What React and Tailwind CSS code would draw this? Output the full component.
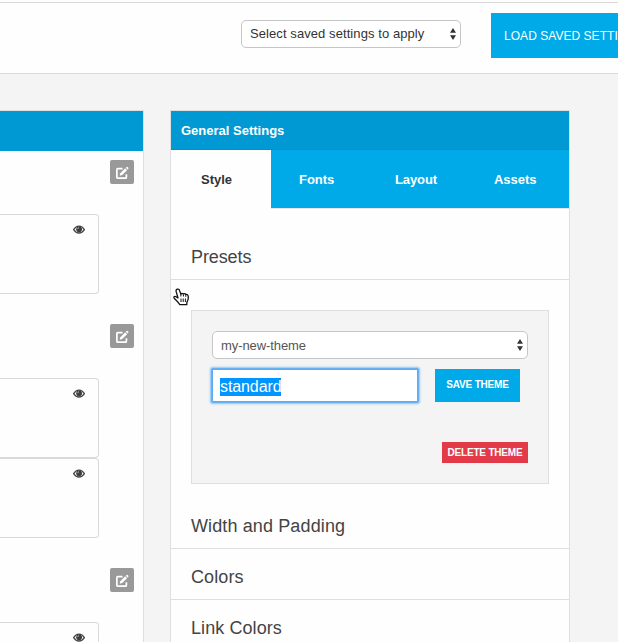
import React from "react";

function EditIcon() {
  return (
    <svg width="14" height="14" viewBox="0 0 14 14" fill="none" className="mt-px block">
      <path d="M7.6 2.6H2.9Q1.9 2.6 1.9 3.6V11.2Q1.9 12.2 2.9 12.2H10.4Q11.4 12.2 11.4 11.2V8.2" stroke="#fff" strokeWidth="1.7" />
      <path d="M4.7 9.8L5.3 7.2L10.2 2.3L12.1 4.2L7.2 9.1Z" fill="#fff" />
      <path d="M10.8 1.7L11.5 1Q12 0.6 12.5 1L13.3 1.8Q13.7 2.3 13.3 2.8L12.6 3.5Z" fill="#fff" />
    </svg>
  );
}

function EyeIcon() {
  return (
    <svg width="12" height="9" viewBox="0 0 12 9" className="block">
      <path d="M0.6 4.7Q2.7 1.2 6 1.2Q9.3 1.2 11.4 4.7Q9.3 8 6 8Q2.7 8 0.6 4.7Z" fill="#fff" stroke="#444" strokeWidth="1.3" />
      <circle cx="6.1" cy="4.3" r="2.9" fill="#3c3c3c" />
      <path d="M4.7 4.2Q4.7 2.8 6 2.7" stroke="#ccc" strokeWidth="0.8" fill="none" />
    </svg>
  );
}

function Arrows() {
  return (
    <svg width="6" height="12" viewBox="0 0 6 12" className="block shrink-0">
      <path d="M3 0L6 4.8H0Z M0 7.2H6L3 12Z" fill="#333" />
    </svg>
  );
}

function EditRow() {
  return (
    <div className="flex justify-end pr-[9px]">
      <button className="flex h-6 w-6 items-center justify-center rounded-[2px] bg-[#999]">
        <EditIcon />
      </button>
    </div>
  );
}

function Card() {
  return (
    <div className="flex h-20 w-[99px] justify-end rounded-r-[4px] border border-l-0 border-[#d9d9d9] bg-[#fefefe] pt-[10px] pr-[13px]">
      <EyeIcon />
    </div>
  );
}

function Section({ title, spacing }) {
  return (
    <div className="h-[51px] shrink-0 border-b border-[#dfdfdf] pl-5 text-[18px] leading-[57px] text-[#444]">
      <span className={spacing}>{title}</span>
    </div>
  );
}

function HandCursor() {
  return (
    <svg width="17" height="18" viewBox="0 0 17 18" className="absolute top-[288px] left-[173px]">
      <path
        d="M4.2 1.2C5.4 0.7 6.2 1.4 6.5 2.4L7.8 6Q9.2 4.8 10.3 6Q11.8 5 12.7 6.4Q14.6 5.9 15.1 7.8C15.6 10.2 15.2 12.2 13.9 14.2L13.8 16.6H6.7C6.1 15 4.8 13.8 3.6 12.7L1.2 10.2C0.4 9 1.4 8 2.6 8.5L5 10L3.1 3.4C2.9 2.4 3.2 1.6 4.2 1.2Z"
        fill="#fff"
        stroke="#111"
        strokeWidth="1.3"
        strokeLinejoin="round"
      />
      <path d="M7.9 6V8.5M10.4 6.3V8.5M12.8 6.7V8.8M8 10.5V14M10.2 10.5V14M12.4 10.5V14" stroke="#111" strokeWidth="1" />
    </svg>
  );
}

export default function App() {
  return (
    <div className="relative flex h-[642px] w-[618px] flex-col overflow-hidden bg-[#f4f4f4] font-['Liberation_Sans',Arial,sans-serif]">
      <header className="flex h-[74px] shrink-0 flex-col border-b border-[#d9d9d9] bg-[#fefefe]">
        <div className="h-[3px] shrink-0 border-b border-[#d9d9d9]" />
        <div className="flex items-start pt-[10px] pl-[241px]">
          <div className="mt-[7px] flex h-7 w-[220px] shrink-0 items-center justify-between rounded-[5px] border border-[#c6c6c6] bg-white pr-1 pl-2 text-[13px] text-[#333]">
            <span className="tracking-[0.08px]">Select saved settings to apply</span>
            <Arrows />
          </div>
          <button className="ml-[30px] h-[45px] w-[190px] shrink-0 bg-[#00a9e7] pl-[13px] text-left text-[12px] tracking-[0.04px] whitespace-nowrap text-white">
            LOAD SAVED SETTINGS
          </button>
        </div>
      </header>

      <main className="flex min-h-0 flex-1 items-stretch pt-9">
        <section className="flex w-36 shrink-0 flex-col overflow-hidden border-t border-r border-[#dfdfdf] bg-[#fefefe]">
          <div className="h-10 shrink-0 bg-[#0099d3]" />
          <div className="flex flex-col gap-[30px] pt-[9px]">
            <EditRow />
            <Card />
            <EditRow />
            <div>
              <Card />
              <Card />
            </div>
            <EditRow />
            <Card />
          </div>
        </section>

        <section className="ml-[26px] flex w-[400px] shrink-0 flex-col overflow-hidden border-x border-t border-[#dfdfdf] bg-[#fefefe]">
          <div className="h-[39px] shrink-0 border-b border-[#0093cb] bg-[#0099d3] pl-[10px] text-[13px] leading-[39px] font-bold text-white">
            General Settings
          </div>
          <nav className="flex h-[58px] shrink-0 text-[13px] leading-[59px] font-bold text-white">
            <div className="w-[100px] pl-[30px] text-[#333]">Style</div>
            <div className="w-[96px] bg-[#00a9e7] pl-[28px] tracking-[-0.05px]">Fonts</div>
            <div className="w-[100px] bg-[#00a9e7] pl-[28px] tracking-[-0.1px]">Layout</div>
            <div className="flex-1 bg-[#00a9e7] pl-[27px] tracking-[-0.05px]">Assets</div>
          </nav>
          <div className="ml-[100px] h-px shrink-0 bg-[#e6e6e6]" />
          <div className="h-5 shrink-0" />
          <Section title="Presets" spacing="tracking-[-0.1px]" />
          <div className="mx-5 mt-[30px] mb-[14px] h-[174px] shrink-0 border border-[#dfdfdf] bg-[#f4f4f4] p-5">
            <div className="flex h-7 items-center justify-between rounded-[5px] border border-[#c6c6c6] bg-white pr-1 pl-2 text-[13px] text-[#555]">
              <span className="pt-[2px] tracking-[-0.08px]">my-new-theme</span>
              <Arrows />
            </div>
            <div className="mt-[10px] flex">
              <div className="flex h-[33px] w-[206px] items-center rounded-[1px] border border-[#5dabf0] bg-white pt-[2px] pl-[7px] text-[16px] shadow-[0_0_0_1px_#67b1f3,0_0_2px_2px_#8cc5f7]">
                <span className="bg-[#0096ff] leading-[18px] tracking-[-0.1px] text-white">standard</span>
              </div>
              <button className="ml-[17px] h-[33px] w-[85px] bg-[#00a9e7] pb-[2px] text-[10px] font-bold tracking-[-0.2px] whitespace-nowrap text-white">
                SAVE THEME
              </button>
            </div>
            <div className="mt-10 flex justify-end">
              <button className="h-[21px] w-[86px] bg-[#e23a48] text-[10px] font-bold tracking-[-0.2px] whitespace-nowrap text-white">
                DELETE THEME
              </button>
            </div>
          </div>
          <Section title="Width and Padding" spacing="tracking-[0.12px]" />
          <Section title="Colors" spacing="tracking-[0.1px]" />
          <Section title="Link Colors" spacing="tracking-[0.08px]" />
        </section>
      </main>
      <HandCursor />
    </div>
  );
}
